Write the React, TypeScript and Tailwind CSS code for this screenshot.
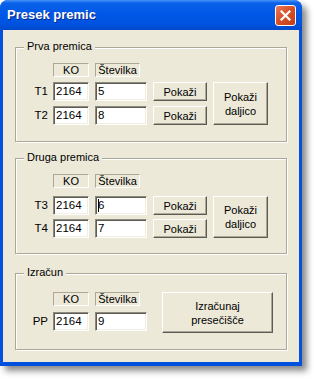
const sunken =
  "bg-white border border-t-[#8c8a7f] border-l-[#8c8a7f] border-b-white border-r-white shadow-[inset_1px_1px_0_#5e5c52,inset_-1px_-1px_0_#f1efe2] pl-[2px] flex items-center text-[11.5px] leading-none";
const headerCell =
  "h-[14px] border border-t-[#aca899] border-l-[#aca899] border-b-white border-r-white flex items-center justify-center text-[11px] leading-none";
const button =
  "bg-[#ece9d8] border border-t-white border-l-white border-b-[#5e5c52] border-r-[#5e5c52] shadow-[inset_-1px_-1px_0_#aca899] flex items-center justify-center text-center text-[11px] leading-[14px]";

function Group({
  title,
  className,
  children,
}: {
  title: string;
  className: string;
  children: React.ReactNode;
}) {
  return (
    <div
      className={
        "relative ml-[12px] w-[272px] border border-[#aca899] shadow-[inset_1px_1px_0_#fff,1px_1px_0_#fff] " +
        className
      }
    >
      <span className="absolute -top-[8px] left-[8px] bg-[#ece9d8] px-[3px] text-[11px] leading-[13px]">
        {title}
      </span>
      {children}
    </div>
  );
}

function Headers() {
  return (
    <div className="flex">
      <div className="w-[32px]" />
      <div className={"ml-[5px] w-[36px] " + headerCell}>KO</div>
      <div className={"ml-[6px] w-[45px] " + headerCell}>Številka</div>
    </div>
  );
}

function Row({
  label,
  ko,
  num,
  caret,
  btn = true,
  className = "",
}: {
  label: string;
  ko: string;
  num: string;
  caret?: boolean;
  btn?: boolean;
  className?: string;
}) {
  return (
    <div className={"flex items-center " + className}>
      <div className="w-[32px] text-right text-[11.5px] leading-none">{label}</div>
      <div className={"ml-[5px] w-[36px] h-[19px] " + sunken}>{ko}</div>
      <div className={"ml-[6px] w-[52px] h-[19px] " + sunken}>
        {caret && <span className="inline-block w-[1px] h-[13px] bg-black mr-[-1px]" />}
        {num}
      </div>
      {btn && <div className={"ml-[6px] w-[54px] h-[19px] " + button}>Pokaži</div>}
    </div>
  );
}

export default function App() {
  return (
    <div className="w-[314px] h-[379px] bg-white font-['Liberation_Sans',Arial,sans-serif] text-black">
      <div className="w-[302px] h-[366px] rounded-t-[8px] bg-[#0250de] flex flex-col shadow-[5px_5px_6px_rgba(0,0,0,0.45)]">
        <div className="h-[30px] rounded-t-[8px] bg-[linear-gradient(to_bottom,#4a95f8_0%,#0a62ea_10%,#0058e6_45%,#0053e0_80%,#0049cc_100%)] flex items-center justify-between pl-[7px] pr-[6px]">
          <span className="text-white font-bold text-[13px] [text-shadow:1px_1px_0_#0a2a8a]">
            Presek premic
          </span>
          <div className="w-[21px] h-[21px] rounded-[3px] border border-white bg-[linear-gradient(135deg,#ea7a5a_0%,#d9512a_45%,#c23e18_100%)] flex items-center justify-center">
            <svg width="11" height="11" viewBox="0 0 11 11">
              <path d="M1.5 1.5 L9.5 9.5 M9.5 1.5 L1.5 9.5" stroke="#fff" strokeWidth="2.2" strokeLinecap="square" />
            </svg>
          </div>
        </div>
        <div className="flex-1 mx-[3px] mb-[4px] bg-[#ece9d8] flex flex-col">
          <Group title="Prva premica" className="mt-[17px] h-[95px] pt-[15px]">
            <Headers />
            <div className="flex items-start mt-[5px]">
              <div>
                <Row label="T1" ko="2164" num="5" />
                <Row label="T2" ko="2164" num="8" className="mt-[5px]" />
              </div>
              <div className={"ml-[6px] w-[55px] h-[43px] " + button}>
                Pokaži
                <br />
                daljico
              </div>
            </div>
          </Group>

          <Group title="Druga premica" className="mt-[16px] h-[96px] pt-[15px]">
            <Headers />
            <div className="flex items-start mt-[8px]">
              <div>
                <Row label="T3" ko="2164" num="6" caret />
                <Row label="T4" ko="2164" num="7" className="mt-[4px]" />
              </div>
              <div className={"ml-[6px] w-[55px] h-[42px] " + button}>
                Pokaži
                <br />
                daljico
              </div>
            </div>
          </Group>

          <Group title="Izračun" className="mt-[19px] h-[77px] pt-[18px]">
            <div className="flex items-start">
              <div>
                <Headers />
                <Row label="PP" ko="2164" num="9" btn={false} className="mt-[6px]" />
              </div>
              <div className={"ml-[15px] w-[111px] h-[41px] " + button}>
                Izračunaj
                <br />
                presečišče
              </div>
            </div>
          </Group>
        </div>
      </div>
    </div>
  );
}
